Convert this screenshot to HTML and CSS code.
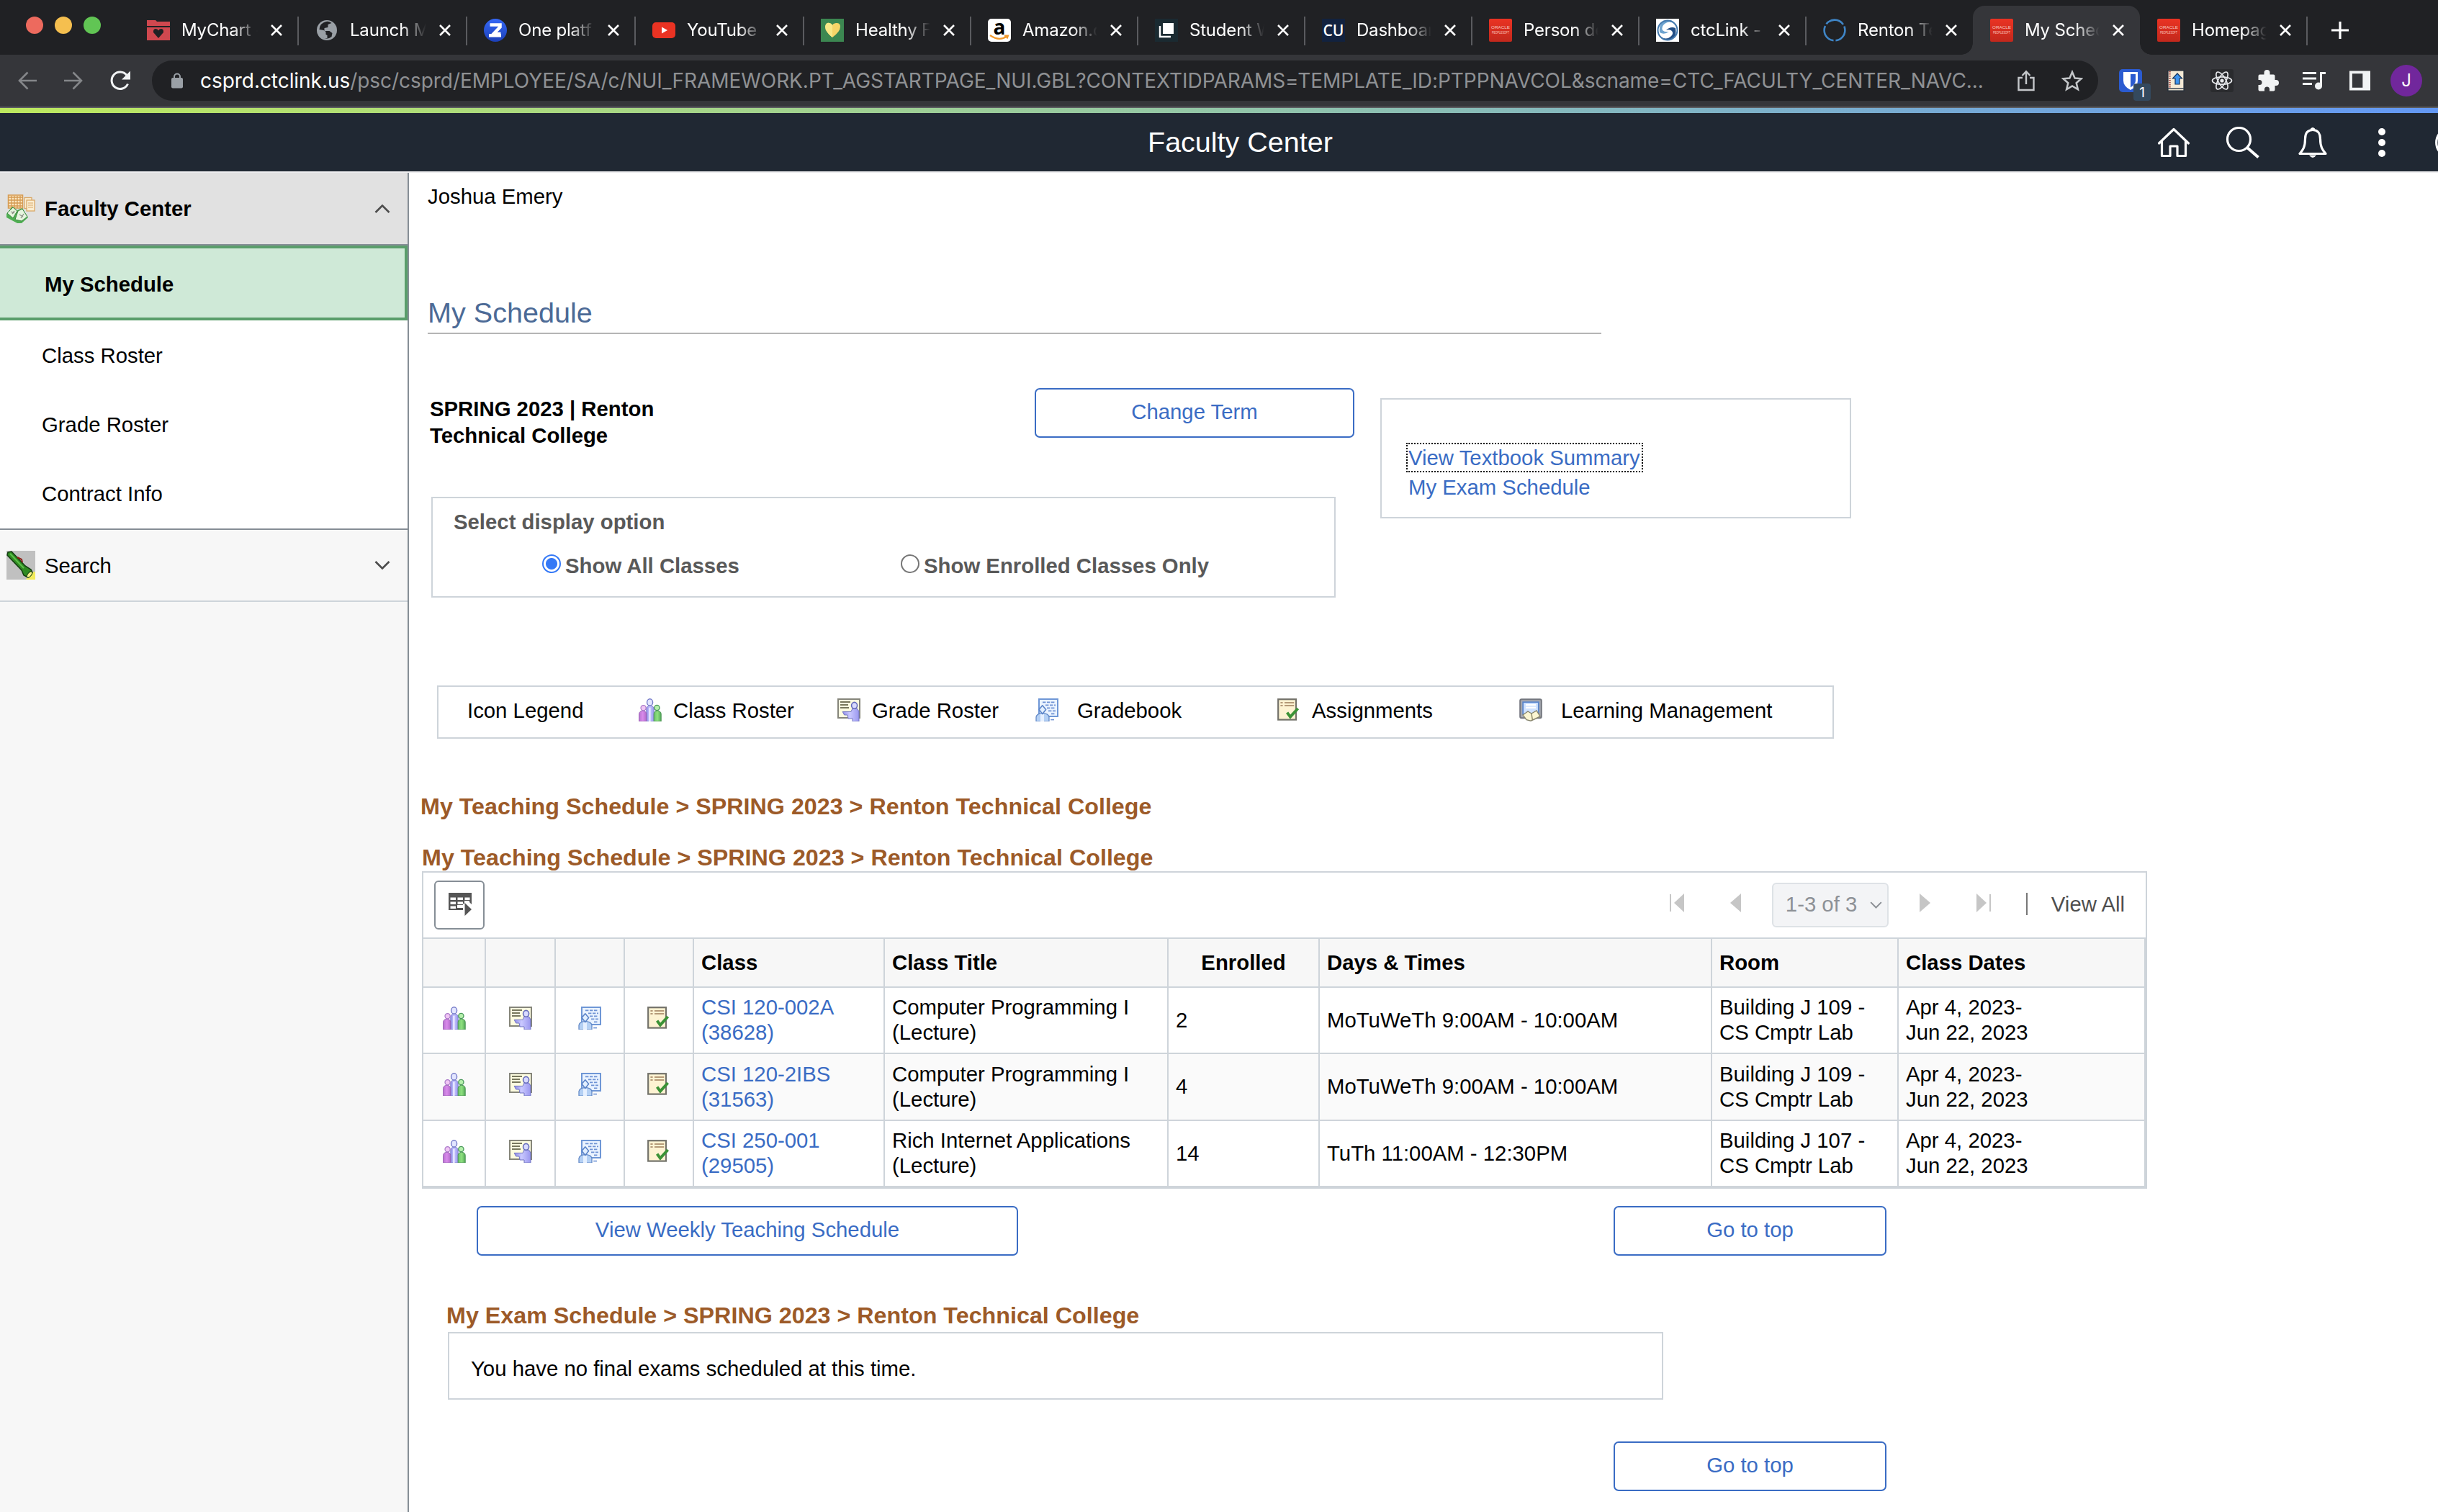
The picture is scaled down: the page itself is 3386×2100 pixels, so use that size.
FILE: index.html
```html
<!DOCTYPE html>
<html lang="en">
<head>
<meta charset="utf-8">
<title>My Schedule</title>
<link rel="stylesheet" href="styles.css">
</head>
<body>
<svg class="defs" width="0" height="0" aria-hidden="true">
  <defs>
    <linearGradient id="oracle-red" x2="0" y2="1"><stop offset="0" stop-color="#ea3323"/><stop offset="1" stop-color="#c2281c"/></linearGradient>
    <linearGradient id="zoom-blue" x2="0" y2="1"><stop offset="0" stop-color="#3568f6"/><stop offset="1" stop-color="#1c40b8"/></linearGradient>
    <linearGradient id="fade-purple"><stop offset="0" stop-color="#8f8ce6"/><stop offset=".45" stop-color="#c9c8ff"/><stop offset="1" stop-color="#9a97ee"/></linearGradient>
    <linearGradient id="fade-pink"><stop offset="0" stop-color="#b974d2"/><stop offset=".5" stop-color="#d98aea"/><stop offset="1" stop-color="#b26acb"/></linearGradient>
    <linearGradient id="fade-green"><stop offset="0" stop-color="#6cc26c"/><stop offset=".5" stop-color="#8ee07e"/><stop offset="1" stop-color="#55a95a"/></linearGradient>
    <symbol id="close" viewBox="0 0 16 16"><path d="M1 1l14 14M15 1L1 15" stroke="#fff" stroke-width="2.6" fill="none"/></symbol>
    <symbol id="oracle" viewBox="0 0 32 32">
      <rect width="32" height="32" rx="2" fill="url(#oracle-red)"/>
      <text x="16" y="13.5" font-size="6" textLength="26" lengthAdjust="spacingAndGlyphs" text-anchor="middle" fill="#f7c3bd" font-family="Liberation Sans, sans-serif">ORACLE</text>
      <text x="16" y="21" font-size="4.5" textLength="24" lengthAdjust="spacingAndGlyphs" text-anchor="middle" fill="#f7c3bd" font-family="Liberation Sans, sans-serif">PEOPLESOFT</text>
    </symbol>
    <symbol id="class-roster" viewBox="0 0 16 16">
      <path d="M5.4 16V7.500Q5.400 5.200 8 5q2.600.2 2.600 2.500V16z" fill="url(#fade-purple)" stroke="#7f80cf" stroke-width=".5"/>
      <path d="M7 16V6.500h1.300V16z" fill="#e4e4ff"/>
      <ellipse cx="7.800" cy="2.700" rx="2" ry="2.300" fill="#e3e6ff" stroke="#7278c8" stroke-width=".7"/>
      <path d="M.3 16v-5.200Q.4 8.800 2.900 8.600q2.400.2 2.500 2.200V16z" fill="url(#fade-pink)" stroke="#9a62b6" stroke-width=".5"/>
      <circle cx="3.300" cy="6.600" r="1.800" fill="#f0c6f4" stroke="#a878c8" stroke-width=".6"/>
      <path d="M10.600 16v-5.200q.1-2 2.500-2.200 2.400.2 2.500 2.200V16z" fill="url(#fade-green)" stroke="#4b9355" stroke-width=".5"/>
      <circle cx="12.700" cy="6.500" r="1.800" fill="#b6f0ac" stroke="#4b9a5c" stroke-width=".7"/>
    </symbol>
    <symbol id="grade-roster" viewBox="0 0 16 16">
      <rect x=".5" y=".5" width="15" height="13" fill="#fdfce0" stroke="#85857a" stroke-width="1"/>
      <path d="M2 2.500h7M2 4.500h5.500M2 6.500h6" stroke="#77775e" stroke-width="1"/>
      <path d="M3.600 9.200h5.900l1-2.200h3.200l1.300 2v7h-4.500v-2H7.500l-.5-2.500H4.800z" fill="url(#fade-purple)" stroke="#7074c0" stroke-width=".5"/>
      <ellipse cx="11.800" cy="4.900" rx="2" ry="2.200" fill="#d9dbff" stroke="#656bbb" stroke-width=".8"/>
    </symbol>
    <symbol id="gradebook" viewBox="0 0 16 16">
      <rect x="2.500" y=".5" width="13" height="12" fill="#eaf3ff" stroke="#6f97d6" stroke-width="1"/>
      <path d="M5 2.700h9M7 4.700h7M8 6.700h6M9 8.700h5M11 10.700h3" stroke="#6f93d4" stroke-width=".9" stroke-dasharray="2.200 .8"/>
      <path d="M.5 16v-3.200Q1 10.600 5 10.200q4 .4 4.500 2.600V16z" fill="#b4d0f4" stroke="#5c84c4" stroke-width=".6"/>
      <path d="M3.500 16v-5h2.500v5z" fill="#e6f0ff"/>
      <path d="M4.900 4.900l2.400 2.900-2.400 3-2.400-3z" fill="#e2efff" stroke="#5b84c8" stroke-width=".8" stroke-linejoin="round"/>
      <path d="M10.600 14.800h2.400" stroke="#6f93d4" stroke-width=".8"/>
    </symbol>
    <symbol id="assignments" viewBox="0 0 16 16">
      <rect x=".6" y=".6" width="12.400" height="14.200" fill="#fdf3d2" stroke="#73726a" stroke-width="1.100"/>
      <path d="M2.200 3h1.600M5 3h6.600M2.200 5h1.600M5 5h6.600" stroke="#b59a78" stroke-width="1"/>
      <path d="M6.800 9.800l2.200 3 5.300-5.800" fill="none" stroke="#3b9236" stroke-width="2"/>
    </symbol>
    <symbol id="learning" viewBox="0 0 16 16">
      <rect x=".6" y=".6" width="14.800" height="13" rx="1" fill="#a8aab2" stroke="#73767e" stroke-width="1"/>
      <rect x="2.600" y="2.600" width="10.800" height="8.400" fill="#cfe2ff" stroke="#5a86cc" stroke-width=".9"/>
      <path d="M4.500 4.600h7M4.500 6.400h7" stroke="#fff" stroke-width="1.100"/>
      <path d="M2.500 11.500L6 9l2.500 1.500L12 8.500l2.500 4-3 1.500-3.500 1.600-3-.8z" fill="#fbf6d2" stroke="#86846c" stroke-width=".7"/>
      <path d="M8.500 10.500l.7 4.600" stroke="#8a8668" stroke-width=".7"/>
    </symbol>
    <symbol id="chevron" viewBox="0 0 22 12"><path d="M1.500 1l9.500 9.500L20.500 1" fill="none" stroke="currentColor" stroke-width="2.600"/></symbol>
  </defs>
</svg>

<div class="tabstrip">
  <div class="lights"><i class="red"></i><i class="yellow"></i><i class="green"></i></div>
  <div class="tab">
    <svg class="fav" viewBox="0 0 32 32"><path d="M0 4V2h12l2 2h18v6H0zM0 12h32v18H0z" fill="#d0484f"/><path d="M16 27l-7-8q-.500-5 3.500-5 2.500 0 3.500 2.500 1-2.500 3.500-2.500 4 0 3.500 5z" fill="#202124"/></svg>
    <span class="label">MyChart -</span><svg class="x"><use href="#close"/></svg></div>
  <div class="tab">
    <svg class="fav" viewBox="0 0 32 32"><circle cx="16" cy="16" r="14" fill="#9aa0a6"/><path d="M15 4q-9 2-9.500 11l6 1 3 2v4l2 1v4q-4 1-7-1 7 4 13-1l1-5-4-3h-7v-4l5-1v-4l5-2q-4-3-7.500-2z" fill="#202124"/></svg>
    <span class="label">Launch M</span><svg class="x"><use href="#close"/></svg></div>
  <div class="tab">
    <svg class="fav" viewBox="0 0 32 32"><circle cx="16" cy="16" r="16" fill="url(#zoom-blue)"/><path d="M8.500 8.500h14v3L13.500 21h10" fill="none" stroke="#fff" stroke-width="4.500"/><path d="M7 23.300h17" stroke="#fff" stroke-width="4.500"/></svg>
    <span class="label">One platf</span><svg class="x"><use href="#close"/></svg></div>
  <div class="tab">
    <svg class="fav" viewBox="0 0 32 32"><rect y="5" width="32" height="22" rx="5" fill="#ea3323"/><path d="M13 11.500v9l8-4.500z" fill="#fff"/></svg>
    <span class="label">YouTube</span><svg class="x"><use href="#close"/></svg></div>
  <div class="tab">
    <svg class="fav" viewBox="0 0 32 32"><rect width="32" height="32" fill="#3c8751"/><path d="M16 26q-10-8-10-15 1-6 6-5 3 .500 4 3 1-2.500 5-3 6-.500 6 5 0 7-11 15z" fill="#f6d568"/><path d="M16 9v17Q6 18 6 11q1-6 6-5 3 .500 4 3z" fill="#f9e887"/></svg>
    <span class="label">Healthy F</span><svg class="x"><use href="#close"/></svg></div>
  <div class="tab">
    <svg class="fav" viewBox="0 0 32 32"><rect width="32" height="32" rx="5" fill="#fff"/><text x="16" y="22" text-anchor="middle" font-family="Open Sans, sans-serif" font-weight="700" font-size="28">a</text><path d="M3 23q13 9 24 1M23 23.500h5l-1.500 4" fill="none" stroke="#f29a2e" stroke-width="2.200"/></svg>
    <span class="label">Amazon.c</span><svg class="x"><use href="#close"/></svg></div>
  <div class="tab">
    <svg class="fav" viewBox="0 0 32 32"><rect width="32" height="32" fill="#1a2a31"/><rect x="11" y="6" width="15" height="15" fill="#fff"/><path d="M7 10v15h15" fill="none" stroke="#fff" stroke-width="2.400"/></svg>
    <span class="label">Student W</span><svg class="x"><use href="#close"/></svg></div>
  <div class="tab">
    <svg class="fav" viewBox="0 0 32 32"><rect width="32" height="32" fill="#12223f"/><text x="16" y="24" text-anchor="middle" font-family="Open Sans, sans-serif" font-weight="600" font-size="22" textLength="29" lengthAdjust="spacingAndGlyphs" fill="#fff">CU</text></svg>
    <span class="label">Dashboar</span><svg class="x"><use href="#close"/></svg></div>
  <div class="tab"><svg class="fav"><use href="#oracle"/></svg><span class="label">Person de</span><svg class="x"><use href="#close"/></svg></div>
  <div class="tab">
    <svg class="fav" viewBox="0 0 32 32"><rect width="32" height="32" fill="#fff"/><path d="M5 19Q3 4 17 2q7 0 9 5-8-5-14 0-5 4-3 9 3 3 9 2-7 5-13 1z" fill="#6da3cf"/><path d="M27 13q3 16-12 17-7 0-9-5 8 5 14 0 5-4 2-8-3-3-8-1 6-6 13-3z" fill="#234f86"/><circle cx="16" cy="16" r="13.500" fill="none" stroke="#4379ad" stroke-width="2"/></svg>
    <span class="label">ctcLink -</span><svg class="x"><use href="#close"/></svg></div>
  <div class="tab">
    <svg class="fav" viewBox="0 0 32 32"><circle cx="16" cy="16" r="14.400" fill="none" stroke="#3f85c6" stroke-width="2.600" stroke-dasharray="27.200 3" stroke-dashoffset="-24"/></svg>
    <span class="label">Renton Te</span><svg class="x"><use href="#close"/></svg></div>
  <div class="tab active"><svg class="fav"><use href="#oracle"/></svg><span class="label">My Sched</span><svg class="x"><use href="#close"/></svg></div>
  <div class="tab"><svg class="fav"><use href="#oracle"/></svg><span class="label">Homepag</span><svg class="x"><use href="#close"/></svg></div>
  <svg class="newtab" viewBox="0 0 24 24"><path d="M12 0v24M0 12h24" stroke="#fff" stroke-width="3.200"/></svg>
</div>

<div class="toolbar">
  <svg class="nav back" viewBox="0 0 26 26"><path d="M26 13H2M13.500 1.500L2 13l11.500 11.500" fill="none" stroke="#85878a" stroke-width="2.600"/></svg>
  <svg class="nav forward" viewBox="0 0 26 26"><path d="M0 13h24M12.500 1.500L24 13 12.500 24.500" fill="none" stroke="#85878a" stroke-width="2.600"/></svg>
  <svg class="nav reload" viewBox="0 0 28 28"><path d="M24.500 18.500A11.700 11.700 0 1 1 23 6.500" fill="none" stroke="#f1f3f4" stroke-width="3"/><path d="M28 .500v12H16z" fill="#f1f3f4"/></svg>
  <div class="omnibox">
    <svg class="lock" viewBox="0 0 16 22"><rect y="7" width="16" height="14.500" rx="2" fill="#9aa0a6"/><path d="M4 8V5.500a4 4 0 0 1 8 0V8" fill="none" stroke="#9aa0a6" stroke-width="2"/></svg>
    <span class="url"><b>csprd.ctclink.us</b>/psc/csprd/EMPLOYEE/SA/c/NUI_FRAMEWORK.PT_AGSTARTPAGE_NUI.GBL?CONTEXTIDPARAMS=TEMPLATE_ID:PTPPNAVCOL&amp;scname=CTC_FACULTY_CENTER_NAVC...</span>
    <svg class="share" viewBox="0 0 24 30"><path d="M7 11H1.500v17h21V11H17M12 20V3M6.500 8L12 2.200 17.500 8" fill="none" stroke="#c4c7ca" stroke-width="2.400"/></svg>
    <svg class="star" viewBox="0 0 30 30"><path d="M15 3l3.600 8.600 9 .700-6.900 6 2.200 8.900L15 22.400l-7.900 4.800 2.200-8.900-6.900-6 9-.700z" fill="none" stroke="#c4c7ca" stroke-width="2.500"/></svg>
  </div>
  <div class="ext shield"><svg viewBox="0 0 32 32"><rect width="32" height="32" rx="5" fill="#2b5bd0"/><path d="M6 4h20v12q0 8-10 13Q6 24 6 16z" fill="#fff"/><path d="M16 7h7v9q0 5-7 9.500z" fill="#2b5bd0"/></svg><span class="badge">1</span></div>
  <svg class="ext book" viewBox="0 0 24 30"><rect x=".800" y=".800" width="22.400" height="28.400" fill="#f5ead5" stroke="#29313c" stroke-width="1.600"/><path d="M3.500 2v24" stroke="#a24a4a" stroke-width="2.500" stroke-dasharray="1.500 1.500"/><path d="M1 26h22" stroke="#3a4655" stroke-width="1.500"/><path d="M14 5l6.500 7h-3.500v8h-6v-8H7.500z" fill="#3d93ee" stroke="#15355e" stroke-width="1.200"/></svg>
  <svg class="ext react" viewBox="0 0 32 32"><rect width="32" height="32" rx="3" fill="#2a2b2e"/><g fill="none" stroke="#e8eaed" stroke-width="1.700"><ellipse cx="16" cy="16" rx="13.500" ry="5.200"/><ellipse cx="16" cy="16" rx="13.500" ry="5.200" transform="rotate(60 16 16)"/><ellipse cx="16" cy="16" rx="13.500" ry="5.200" transform="rotate(120 16 16)"/></g><circle cx="16" cy="16" r="2.600" fill="#e8eaed"/></svg>
  <svg class="ext puzzle" viewBox="0 0 30 30"><path d="M3.500 6.500h6V4a4 4 0 0 1 8 0v2.500h5q2 0 2 2V14h1.500a4 4 0 0 1 0 8h-1.500v5.500q0 2-2 2H17v-2.500a3.500 3.500 0 0 0-7 0v2.500H3.500q-2 0-2-2V21H3a3.500 3.500 0 0 0 0-7H1.500V8.500q0-2 2-2z" fill="#f1f3f4"/></svg>
  <svg class="ext music" viewBox="0 0 32 26"><path d="M0 2.500h19M0 10h19M0 17.500h13" stroke="#f1f3f4" stroke-width="3"/><circle cx="22" cy="20.500" r="5" fill="#f1f3f4"/><path d="M25.500 20.500V2.500H32" fill="none" stroke="#f1f3f4" stroke-width="3"/></svg>
  <svg class="ext panel" viewBox="0 0 30 28"><path d="M0 0h30v28H0zM4 4v20h15V4z" fill="#f1f3f4" fill-rule="evenodd"/></svg>
  <div class="avatar">J</div>
</div>
<div class="accent"></div>

<header class="banner">
  <h1>Faculty Center</h1>
  <div class="actions">
    <svg class="home" viewBox="0 0 46 42"><path d="M2.500 22L23 2.500 43.500 22M6.500 19v20.500H18V26h10v13.500h11.500V19" fill="none" stroke="#fff" stroke-width="3.200" stroke-linejoin="round" stroke-linecap="round"/></svg>
    <svg class="search" viewBox="0 0 47 44"><circle cx="18.500" cy="17.500" r="16" fill="none" stroke="#fff" stroke-width="3.200"/><path d="M30 29l15.500 13.500" stroke="#fff" stroke-width="4"/></svg>
    <svg class="bell" viewBox="0 0 40 44"><path d="M20 4.500c-8 0-10.500 6-10.500 12.500 0 11-3 15-7.500 20.500h36c-4.500-5.500-7.500-9.500-7.500-20.500C30.500 10.500 28 4.500 20 4.500z" fill="none" stroke="#fff" stroke-width="3.200" stroke-linejoin="round"/><path d="M17 4V2.500q3-3 6 0V4zM15 39.500h10q-5 7-10 0z" fill="#fff"/></svg>
    <svg class="dots" viewBox="0 0 12 42"><circle cx="6" cy="6" r="5" fill="#fff"/><circle cx="6" cy="21" r="5" fill="#fff"/><circle cx="6" cy="36" r="5" fill="#fff"/></svg>
    <svg class="compass" viewBox="0 0 44 44"><circle cx="22" cy="22" r="20.300" fill="none" stroke="#fff" stroke-width="3.200"/></svg>
  </div>
</header>

<div class="page">
  <nav class="side">
    <div class="group open">
      <svg class="gicon" viewBox="0 0 40 40"><rect x="2.500" y="1" width="20" height="18" fill="#fbe6c0" stroke="#d59a52" stroke-width="1.500"/><path d="M3 4h19M7 2v17M11 2v17M15 2v17M19 2v17M3 8h19M3 12h19M3 16h19" stroke="#d59a52" stroke-width="1.300"/><rect x="25" y="4.500" width="10" height="15" fill="#fbeed2" stroke="#d9a868" stroke-width="1.300"/><rect x="28" y="8" width="11" height="15" fill="#fbeed2" stroke="#d9a868" stroke-width="1.300"/><path d="M30 12h7M30 15h7M30 18h7" stroke="#d9a868" stroke-width="1.200"/><path d="M0 27l8-10 7 5 7-3 8 13-9 8H15L0 32z" fill="#4fae52"/><path d="M1 26l8-8 6 5-6 10zM16 23l6-3 7 11-8 6-9-2z" fill="#e6f5df" stroke="#3b8a40" stroke-width="1"/><path d="M6 24l5 2M8 27l3-4M18 28l5 3M20 33l4-6" stroke="#8b8f86" stroke-width="1.300"/></svg>
      <span>Faculty Center</span>
      <svg class="chev up"><use href="#chevron"/></svg>
    </div>
    <a class="item current">My Schedule</a>
    <a class="item">Class Roster</a>
    <a class="item">Grade Roster</a>
    <a class="item">Contract Info</a>
    <div class="group closed">
      <svg class="gicon" viewBox="0 0 40 40"><rect width="40" height="40" fill="#c0c0c0"/><path d="M33 30l7-1v11H27z" fill="#f2ec5c"/><path d="M2 2l5-1 19 20 8 5 2 4-6 7-6-3-3-7L1 6z" fill="#2f8a22" stroke="#123d10" stroke-width="1.500"/><path d="M5 4l19 20" stroke="#5cc04a" stroke-width="2"/><path d="M15 9l6 3 1 4" fill="none" stroke="#8c2018" stroke-width="2"/><ellipse cx="32" cy="33" rx="5" ry="2.500" transform="rotate(-52 32 33)" fill="#f7f28a" stroke="#123d10"/></svg>
      <span>Search</span>
      <svg class="chev"><use href="#chevron"/></svg>
    </div>
  </nav>

  <main class="main">
    <div class="person">Joshua Emery</div>
    <h2 class="title">My Schedule</h2>

    <section class="term-area">
      <div class="term-left">
        <div class="term-row">
          <div class="term">SPRING 2023 | Renton<br>Technical College</div>
          <a class="btn change">Change Term</a>
        </div>
        <div class="display-box">
          <div class="display-title">Select display option</div>
          <div class="radios">
            <label class="radio"><i class="dot on"></i>Show All Classes</label>
            <label class="radio"><i class="dot"></i>Show Enrolled Classes Only</label>
          </div>
        </div>
      </div>
      <div class="links-box">
        <a class="focused">View Textbook Summary</a>
        <a>My Exam Schedule</a>
      </div>
    </section>

    <section class="legend">
      <span>Icon Legend</span>
      <span><svg class="ic"><use href="#class-roster"/></svg>Class Roster</span>
      <span><svg class="ic"><use href="#grade-roster"/></svg>Grade Roster</span>
      <span class="wide"><svg class="ic"><use href="#gradebook"/></svg>Gradebook</span>
      <span><svg class="ic"><use href="#assignments"/></svg>Assignments</span>
      <span class="wide"><svg class="ic"><use href="#learning"/></svg>Learning Management</span>
    </section>

    <h3 class="crumb first">My Teaching Schedule &gt; SPRING 2023 &gt; Renton Technical College</h3>
    <h3 class="crumb second">My Teaching Schedule &gt; SPRING 2023 &gt; Renton Technical College</h3>

    <section class="grid">
      <div class="grid-bar">
        <a class="grid-btn"><svg viewBox="0 0 32 32"><path d="M0 0h32v16l-3-3v-2h-7v4h-2v2h-8v4h8v3H0zM2.500 6.500v3.500h7.500V6.500zm10 0v3.500h7.500V6.500zm10 0v3.500h7V6.500zm-20 6v3.500h7.500v-3.500zm10 0v3.500h7.500v-3.500zm-10 6v3.500h7.500v-3.500z" fill="#555" fill-rule="evenodd"/><path d="M22.500 14l9.500 9-9.500 9z" fill="#555"/></svg></a>
        <div class="pager">
          <svg class="p-first" viewBox="0 0 20 26"><path d="M1 1v24" stroke="#c6c6c6" stroke-width="2"/><path d="M20 0v26L6 13z" fill="#c6c6c6"/></svg>
          <svg class="p-prev" viewBox="0 0 15 26"><path d="M15 0v26L0 13z" fill="#c6c6c6"/></svg>
          <span class="range">1-3 of 3<svg><use href="#chevron"/></svg></span>
          <svg class="p-next" viewBox="0 0 15 26"><path d="M0 0v26l15-13z" fill="#c6c6c6"/></svg>
          <svg class="p-last" viewBox="0 0 20 26"><path d="M19 1v24" stroke="#c6c6c6" stroke-width="2"/><path d="M0 0v26l14-13z" fill="#c6c6c6"/></svg>
          <i class="bar"></i>
          <span class="all">View All</span>
        </div>
      </div>
      <div class="row head">
        <div></div><div></div><div></div><div></div>
        <div>Class</div><div>Class Title</div><div class="mid">Enrolled</div><div>Days &amp; Times</div><div>Room</div><div>Class Dates</div>
      </div>
      <div class="row">
        <div class="ico"><svg class="ic"><use href="#class-roster"/></svg></div><div class="ico"><svg class="ic"><use href="#grade-roster"/></svg></div><div class="ico"><svg class="ic"><use href="#gradebook"/></svg></div><div class="ico"><svg class="ic"><use href="#assignments"/></svg></div>
        <div><a>CSI 120-002A<br>(38628)</a></div><div>Computer Programming I<br>(Lecture)</div><div>2</div><div>MoTuWeTh 9:00AM - 10:00AM</div><div>Building J 109 -<br>CS Cmptr Lab</div><div>Apr 4, 2023-<br>Jun 22, 2023</div>
      </div>
      <div class="row alt">
        <div class="ico"><svg class="ic"><use href="#class-roster"/></svg></div><div class="ico"><svg class="ic"><use href="#grade-roster"/></svg></div><div class="ico"><svg class="ic"><use href="#gradebook"/></svg></div><div class="ico"><svg class="ic"><use href="#assignments"/></svg></div>
        <div><a>CSI 120-2IBS<br>(31563)</a></div><div>Computer Programming I<br>(Lecture)</div><div>4</div><div>MoTuWeTh 9:00AM - 10:00AM</div><div>Building J 109 -<br>CS Cmptr Lab</div><div>Apr 4, 2023-<br>Jun 22, 2023</div>
      </div>
      <div class="row last">
        <div class="ico"><svg class="ic"><use href="#class-roster"/></svg></div><div class="ico"><svg class="ic"><use href="#grade-roster"/></svg></div><div class="ico"><svg class="ic"><use href="#gradebook"/></svg></div><div class="ico"><svg class="ic"><use href="#assignments"/></svg></div>
        <div><a>CSI 250-001<br>(29505)</a></div><div>Rich Internet Applications<br>(Lecture)</div><div>14</div><div>TuTh 11:00AM - 12:30PM</div><div>Building J 107 -<br>CS Cmptr Lab</div><div>Apr 4, 2023-<br>Jun 22, 2023</div>
      </div>
    </section>

    <div class="buttons">
      <a class="btn weekly">View Weekly Teaching Schedule</a>
      <a class="btn top">Go to top</a>
    </div>

    <h3 class="crumb exam">My Exam Schedule &gt; SPRING 2023 &gt; Renton Technical College</h3>
    <div class="exam-box">You have no final exams scheduled at this time.</div>
    <a class="btn top final">Go to top</a>
  </main>
</div>
</body>
</html>
```
FILE: styles.css
```css
* { box-sizing: border-box; }
html, body { margin: 0; height: 2100px; overflow: hidden; }
body {
  display: flex;
  flex-direction: column;
  width: 3386px;
  background: #fff;
  color: #000;
  font: 29.33px/35px "Liberation Sans", Arial, sans-serif;
}
.defs { position: absolute; }
svg { display: block; flex: none; }
h1, h2, h3 { margin: 0; font-weight: 400; }

/* Tab strip */
.tabstrip {
  display: flex;
  height: 76px;
  background: #202124;
  font: 24px/32px Inter, sans-serif;
  color: #fff;
}
.lights { display: flex; gap: 16px; width: 180px; padding: 23px 0 0 36px; }
.lights i { width: 24px; height: 24px; border-radius: 50%; }
.red { background: #ed6a5e; }
.yellow { background: #f5bf4f; }
.green { background: #61c554; }
.tab {
  position: relative;
  display: flex;
  align-items: center;
  flex: none;
  width: 232px;
  height: 68px;
  margin-top: 8px;
  padding-left: 24px;
}
.tab:nth-child(-n+5) { width: 234px; }
.tab::after {
  content: "";
  position: absolute;
  right: -1px;
  top: 15px;
  width: 2px;
  height: 40px;
  background: #5a5b5f;
}
.tab:nth-child(12)::after, .tab.active::after { display: none; }
.tab.active { background: #35363a; border-radius: 16px 16px 0 0; }
.tab.active::before {
  content: "";
  position: absolute;
  left: -16px;
  right: -16px;
  bottom: 0;
  height: 16px;
  background:
    radial-gradient(circle at 0 0, transparent 15.5px, #35363a 16px) left / 16px 16px no-repeat,
    radial-gradient(circle at 100% 0, transparent 15.5px, #35363a 16px) right / 16px 16px no-repeat;
}
.fav { width: 32px; height: 32px; }
.label {
  width: 106px;
  margin-left: 16px;
  white-space: nowrap;
  letter-spacing: -.2px;
  -webkit-mask-image: linear-gradient(90deg, #000 66%, transparent 98%);
  mask-image: linear-gradient(90deg, #000 66%, transparent 98%);
}
.tab:nth-child(-n+5) .label { width: 108px; }
.tab .x { width: 16px; height: 16px; margin-left: 16px; }
.newtab { width: 24px; height: 24px; margin: 30px 0 0 34px; }

/* Toolbar */
.toolbar { display: flex; align-items: center; height: 72px; background: #35363a; }
.nav { width: 26px; height: 26px; }
.back { margin-left: 25px; }
.forward { margin-left: 38px; }
.nav.reload { width: 28px; height: 28px; margin: 0 30px 0 38px; }
.omnibox {
  display: flex;
  align-items: center;
  width: 2703px;
  height: 56px;
  padding-left: 27px;
  border-radius: 28px;
  background: #202124;
}
.lock { width: 16px; height: 22px; }
.url {
  width: 2500px;
  margin-left: 24px;
  color: #8f9194;
  font: 28px/36px Inter, sans-serif;
  letter-spacing: -.05px;
  white-space: nowrap;
}
.url b { font-weight: 400; color: #fff; }
.share { width: 24px; height: 30px; margin-left: 24px; }
.star { width: 30px; height: 30px; margin-left: 37px; }
.shield { position: relative; margin-left: 29px; }
.shield svg { width: 32px; height: 32px; }
.badge {
  position: absolute;
  left: 20px;
  top: 20px;
  width: 24px;
  height: 24px;
  border-radius: 4px;
  background: #34495e;
  color: #fff;
  font: 19px/25px Inter, sans-serif;
  text-align: center;
}
.book { width: 24px; height: 30px; margin-left: 35px; }
.react { width: 32px; height: 32px; margin-left: 36px; }
.puzzle { width: 30px; height: 30px; margin-left: 33px; }
.music { width: 32px; height: 26px; margin-left: 33px; }
.panel { width: 29px; height: 28px; margin-left: 33px; }
.avatar {
  width: 44px;
  height: 44px;
  margin-left: 28px;
  border-radius: 50%;
  background: #71279c;
  color: #fff;
  font: 24px/44px Inter, sans-serif;
  text-align: center;
}
.accent {
  height: 9px;
  border-top: 2px solid #5b5c60;
  background: linear-gradient(90deg, #bde95f, #93c6a8 50%, #6398f5);
}

/* Page banner */
.banner { display: flex; height: 83px; border-bottom: 2px solid #eeeef0; background: #202833; overflow: hidden; }
.banner h1 { flex: none; width: 1402px; margin-left: 1594px; font-size: 39.500px; line-height: 80px; color: #fff; }
.actions { display: flex; align-items: center; flex: none; }
.home { width: 46px; height: 42px; }
.search { width: 47px; height: 44px; margin-left: 49px; }
.bell { width: 40px; height: 44px; margin-left: 54px; }
.dots { width: 12px; height: 42px; margin-left: 70px; }
.compass { width: 44px; height: 44px; margin-left: 68px; }

/* Left navigation */
.page { display: flex; flex: 1; }
.side { width: 568px; border-right: 2px solid #868e96; background: #f7f7f7; }
.group { display: flex; align-items: center; padding: 0 24px 0 9px; }
.group span { flex: 1; margin-left: 13px; }
.gicon { width: 40px; height: 40px; }
.chev { width: 22px; height: 12px; color: #4d4d4d; }
.chev.up { transform: rotate(180deg); }
.group.open { height: 101px; border-bottom: 2px solid #868e96; background: #e1e1e1; font-weight: 700; }
.group.closed { height: 102px; margin-top: 1px; border-top: 2px solid #868e96; border-bottom: 2px solid #ced4da; }
.item { display: block; height: 96px; padding-left: 58px; background: #fff; line-height: 98px; }
.item.current {
  height: 104px;
  padding-left: 62px;
  border: 4px solid #5a9e6b;
  border-left: 0;
  background: #cfe9d7;
  font-weight: 700;
  line-height: 99px;
}

/* Main column */
.main { display: flex; flex-direction: column; align-items: flex-start; width: 2818px; }
.person { height: 36px; margin: 15px 0 0 26px; line-height: 36px; }
.title {
  width: 1630px;
  height: 55px;
  margin: 118px 0 0 26px;
  border-bottom: 2px solid #b5b5b5;
  color: #4c6a96;
  font-size: 39.600px;
  line-height: 50px;
}
.btn {
  display: block;
  height: 69px;
  border: 2px solid #3a6cc4;
  border-radius: 7px;
  color: #3a6cc4;
  line-height: 61px;
  text-align: center;
}
.term-area { display: flex; height: 291px; margin: 75px 0 0 29px; }
.term-left { width: 1284px; }
.term-row { display: flex; height: 151px; }
.term { width: 840px; padding-top: 10px; font-weight: 700; line-height: 37px; }
.change { width: 444px; }
.display-box {
  width: 1256px;
  height: 140px;
  margin-left: 2px;
  padding: 15px 0 0 29px;
  border: 2px solid #ced4da;
  color: #595959;
  font-weight: 700;
}
.radios { display: flex; padding: 26px 0 0 123px; }
.radio { display: flex; width: 498px; white-space: nowrap; }
.dot {
  flex: none;
  width: 26px;
  height: 26px;
  margin: 2px 6px 0 0;
  border: 2px solid #767676;
  border-radius: 50%;
}
.dot.on { border-color: #3478f6; background: radial-gradient(circle, #3478f6 7.500px, #fff 8.500px); }
.links-box {
  width: 654px;
  height: 167px;
  margin: 14px 0 0 36px;
  padding: 60px 0 0 34px;
  border: 2px solid #ced4da;
  color: #3a6cc4;
}
.links-box a { display: block; width: max-content; padding: 0 1px; border: 2px solid transparent; line-height: 37px; }
.links-box .focused { height: 41px; padding: 0 2px 0 1px; border: 2px dotted #000; }

.legend {
  display: grid;
  grid-template-columns: 238px 276px 275px 336px 336px auto;
  align-items: center;
  width: 1940px;
  height: 74px;
  margin: 122px 0 0 39px;
  padding: 0 0 6px 40px;
  border: 2px solid #ced4da;
}
.legend span { display: flex; align-items: center; white-space: nowrap; }
.ic { width: 32px; height: 32px; }
.legend .ic { margin-right: 16px; }
.legend .wide .ic { margin-right: 26px; }

.crumb { height: 40px; color: #9c5a28; font-size: 32.270px; font-weight: 700; line-height: 40px; white-space: nowrap; }
.first { margin: 74px 0 0 16px; }
.second { height: 38px; margin: 32px 0 0 18px; line-height: 38px; }

/* Schedule grid */
.grid { width: 2396px; margin-left: 18px; border: 2px solid #ced4da; border-right: 0; border-bottom: 0; }
.grid-bar { display: flex; justify-content: space-between; height: 90px; border-right: 2px solid #ced4da; }
.grid-btn { width: 70px; height: 68px; margin: 11px 0 0 15px; padding: 15px 0 0 18px; border: 2px solid #868e96; border-radius: 6px; }
.grid-btn svg { width: 32px; height: 32px; }
.pager { display: flex; align-items: center; height: 62px; margin: 14px 29px 0 0; }
.pager > svg { height: 26px; margin-top: -6px; }
.p-first { width: 20px; }
.p-prev { width: 15px; margin-left: 64px; }
.range {
  display: flex;
  align-items: center;
  width: 162px;
  height: 62px;
  margin-left: 43px;
  padding-left: 17px;
  padding-bottom: 3px;
  border: 2px solid #dee2e6;
  border-radius: 6px;
  background: #f3f4f6;
  color: #8d9196;
  white-space: nowrap;
}
.range svg { width: 17px; height: 10px; margin: 2px 0 0 18px; }
.p-next { width: 15px; margin-left: 43px; }
.p-last { width: 20px; margin-left: 64px; }
.bar { width: 2px; height: 31px; margin: -4px 33px 0 49px; background: #777; }
.all { margin-top: -3px; color: #4f4f4f; white-space: nowrap; }
.row {
  display: grid;
  grid-template-columns: 87px 97px 96px 96px 265px 394px 210px 545px 259px 345px;
  height: 92px;
  border-bottom: 2px solid #ced4da;
}
.row > div {
  display: flex;
  align-items: center;
  padding-left: 10px;
  border-right: 2px solid #ced4da;
  line-height: 34.700px;
  white-space: nowrap;
}
.row > div:last-child { border-right-width: 4px; }
.row > .ico { justify-content: center; padding: 0 0 7px; }
.row > .mid { justify-content: center; padding: 0; }
.row a { color: #3a6cc4; }
.head { height: 70px; border-top: 2px solid #ced4da; background: #f7f7f7; font-weight: 700; }
.alt { height: 93px; background: #fafafa; }
.last { height: 94px; border-bottom-width: 4px; }

.buttons { display: flex; gap: 827px; margin: 24px 0 0 94px; }
.weekly { width: 752px; }
.top { width: 379px; }
.exam { margin: 63px 0 0 52px; }
.exam-box { width: 1688px; height: 94px; margin: 3px 0 0 54px; padding-left: 30px; border: 2px solid #ced4da; line-height: 98px; }
.final { margin: 58px 0 0 1673px; }
```
